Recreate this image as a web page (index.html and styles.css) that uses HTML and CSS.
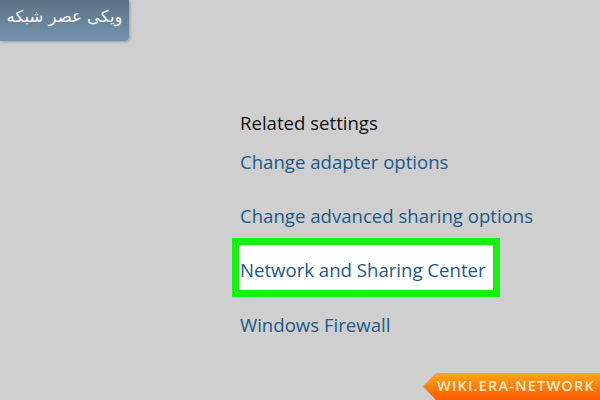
FILE: index.html
```html
<!DOCTYPE html>
<html lang="en">
  <head>
    <meta charset="UTF-8" />
    <title>Related settings</title>
    <link rel="stylesheet" href="styles.css">
  </head>
  <body>
    <div class="badge" dir="rtl">ویکی عصر شبکه</div>

    <div class="settings">
      <h2>Related settings</h2>
      <a class="link first">Change adapter options</a>
      <a class="link">Change advanced sharing options</a>
      <a class="link highlight">Network and Sharing Center</a>
      <a class="link last">Windows Firewall</a>
    </div>

    <div class="ribbon">WIKI.ERA-NETWORK</div>
  </body>
</html>
```

FILE: styles.css
```css
*,
*::before,
*::after {
  box-sizing: border-box;
  margin: 0;
  padding: 0;
}
html,
body {
  width: 600px;
  height: 400px;
  overflow: hidden;
}
body {
  position: relative;
  background-color: #cfcfcf;
  font-family: "Open Sans", "Noto Sans", sans-serif;
  padding: 110px 0 0 240px;
}

.badge {
  position: absolute;
  top: 0;
  left: 0;
  width: 129px;
  height: 41px;
  padding-top: 7px;
  text-align: center;
  color: #f4f6f8;
  font-family: "DejaVu Sans", sans-serif;
  font-size: 16.5px;
  background: linear-gradient(#5c7285, #7394ad);
  border-bottom-right-radius: 4px;
  box-shadow: 1px 1px 3px rgba(0, 0, 0, 0.25);
}

.settings {
  display: flex;
  flex-direction: column;
  align-items: flex-start;
}
h2 {
  font-size: 18.6px;
  font-weight: 400;
  color: #111;
  line-height: 26px;
}
.link {
  font-size: 18.6px;
  color: #215989;
  line-height: 26px;
  margin-top: 28px;
}
.link.first {
  margin-top: 13px;
}
.link.highlight {
  margin: 9px 0 0 -8px;
  padding: 12px 0 7px 1px;
  width: 268px;
  background-color: #fff;
  border: 7px solid #14f20f;
}
.link.last {
  margin-top: 15px;
}

.ribbon {
  position: absolute;
  right: 0;
  bottom: 0;
  width: 177px;
  height: 27px;
  padding: 3px 0 0 14px;
  color: #fde9c8;
  font-family: "Open Sans", sans-serif;
  font-size: 14.5px;
  font-weight: 600;
  letter-spacing: 1.2px;
  background: linear-gradient(#fba618, #ff5a00);
  clip-path: polygon(13px 0, 100% 0, 100% 100%, 13px 100%, 0 50%);
}
```
